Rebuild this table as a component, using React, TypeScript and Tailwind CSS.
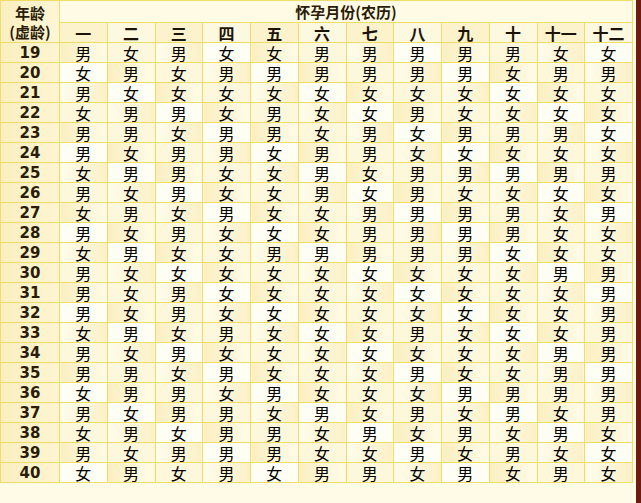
const months = ["一", "二", "三", "四", "五", "六", "七", "八", "九", "十", "十一", "十二"];

const chart: [number, string][] = [
  [19, "男女男女女男男男男男女女"],
  [20, "女男女男男男男男男女男男"],
  [21, "男女女女女女女女女女女女"],
  [22, "女男男女男女女男女女女女"],
  [23, "男男女男男女男女男男男女"],
  [24, "男女男男女男男女女女女女"],
  [25, "女男男女女男女男男男男男"],
  [26, "男女男女女男女男女女女女"],
  [27, "女男女男女女男男男男女男"],
  [28, "男女男女女女男男男男女女"],
  [29, "女男女女男男男男男女女女"],
  [30, "男女女女女女女女女女男男"],
  [31, "男女男女女女女女女女女男"],
  [32, "男女男女女女女女女女女男"],
  [33, "女男女男女女女男女女女男"],
  [34, "男女男女女女女女女女男男"],
  [35, "男男女男女女女男女女男男"],
  [36, "女男男女男女女女男男男男"],
  [37, "男女男男女男女男女男女男"],
  [38, "女男女男男女男女男女男女"],
  [39, "男女男男男女女男女男女女"],
  [40, "女男女男女男男女男女男女"],
];

const cjk = "font-['Noto_Sans_CJK_SC','Noto_Sans',sans-serif]";

function cellBg(r: number, c: number) {
  const k = (r * 5 + c * 3) % 4;
  if (k === 0) return "bg-gradient-to-r from-[#fbefc0] to-[#fffbe8]";
  if (k === 1) return "bg-[#fffef4]";
  if (k === 2) return "bg-gradient-to-l from-[#fbf0c6] to-[#fffcec]";
  return "bg-[#fdf7dc]";
}

export default function App() {
  return (
    <div className="flex w-[641px] h-[503px] bg-[#fffbe6] overflow-hidden">
      <div className="w-[633px] shrink-0">
        <table className="w-[633px] table-fixed border-collapse">
          <colgroup>
            <col className="w-[59px]" />
            {months.map((m) => (
              <col key={m} />
            ))}
          </colgroup>
          <thead>
            <tr className="h-[22px]">
              <th
                rowSpan={2}
                className={`border border-[#efdd66] bg-gradient-to-r from-[#fbefc0] to-[#fdf6d6] p-0 text-[15px] leading-[19px] font-bold text-[#2a1c08] ${cjk}`}
              >
                年龄
                <br />
                (虚龄)
              </th>
              <th
                colSpan={12}
                className={`border border-[#efdd66] bg-[#fffbe4] p-0 text-[15px] leading-[18px] font-bold text-[#2a1c08] ${cjk}`}
              >
                怀孕月份(农历)
              </th>
            </tr>
            <tr className="h-[20px]">
              {months.map((m, i) => (
                <th
                  key={m}
                  className={`border border-[#efdd66] p-0 text-[16px] leading-[16px] font-bold text-[#1c1408] ${cjk} ${
                    i % 2 === 0 ? "bg-[#fcf3cc]" : "bg-[#fdf8e0]"
                  }`}
                >
                  {m}
                </th>
              ))}
            </tr>
          </thead>
          <tbody>
            {chart.map(([age, row], r) => (
              <tr key={age} className="h-[20px]">
                <td className="border border-[#efdd66] bg-gradient-to-r from-[#fbefc0] to-[#fdf5d2] p-0 text-center text-[15px] leading-[16px] font-bold text-[#2a1c08] font-['DejaVu_Sans',sans-serif]">
                  {age}
                </td>
                {Array.from(row).map((g, c) => (
                  <td
                    key={c}
                    className={`border border-[#efdd66] p-0 text-center text-[16px] leading-[16px] text-black ${cjk} ${cellBg(r, c)}`}
                  >
                    {g}
                  </td>
                ))}
              </tr>
            ))}
          </tbody>
        </table>
      </div>
      <div className="w-[3px] shrink-0 bg-[#fffbe6]" />
      <div className="w-[5px] shrink-0 bg-[#6e1c12]" />
    </div>
  );
}
